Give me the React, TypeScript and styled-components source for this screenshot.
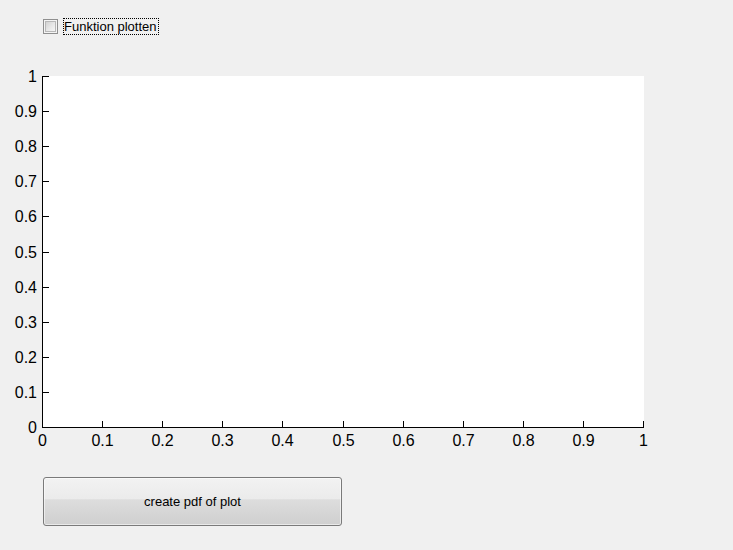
import React from "react";
import styled, { createGlobalStyle } from "styled-components";

const GlobalStyle = createGlobalStyle`
  html, body {
    margin: 0;
    padding: 0;
    background: #f0f0f0;
  }
  body {
    font-family: "Liberation Sans", Arial, sans-serif;
  }
`;

const Page = styled.div`
  width: 733px;
  height: 550px;
  background: #f0f0f0;
  padding-top: 18px;
  box-sizing: border-box;
  display: flex;
  flex-direction: column;
  align-items: flex-start;
  overflow: hidden;
`;

const CheckRow = styled.label`
  display: flex;
  align-items: center;
  gap: 5px;
  margin-left: 43px;
  height: 17px;
  cursor: default;
`;

const Box = styled.span`
  width: 13px;
  height: 13px;
  border: 1px solid #8f8f8f;
  box-sizing: content-box;
  display: flex;
  align-items: center;
  justify-content: center;
  background: #f4f4f4;
`;

const BoxInner = styled.span`
  width: 9px;
  height: 9px;
  border: 1px solid #b8b8b8;
  background: linear-gradient(135deg, #d2d2d2 0%, #e6e6e6 50%, #f6f6f6 100%);
`;

const LabelText = styled.span`
  font-family: "Liberation Sans", Arial, sans-serif;
  font-size: 13px;
  color: #000;
  line-height: 15px;
  padding: 0 1px 0 0;
  border: 1px dotted #000;
  white-space: nowrap;
`;

const PlotSvg = styled.svg`
  display: block;
  margin-top: 25px;
  flex-shrink: 0;
`;

const TickLabel = styled.text`
  font-family: "Liberation Sans", Arial, sans-serif;
  font-size: 16px;
  fill: #000;
`;

const PdfButton = styled.button`
  margin-top: 17px;
  margin-left: 43px;
  width: 299px;
  height: 49px;
  box-sizing: border-box;
  border: 1px solid #7a7a7a;
  border-radius: 3px;
  box-shadow: inset 0 0 0 1px rgba(255, 255, 255, 0.55);
  background: linear-gradient(
    to bottom,
    #f2f2f2 0%,
    #ebebeb 45%,
    #dddddd 46%,
    #cfcfcf 100%
  );
  font-family: "Liberation Sans", Arial, sans-serif;
  font-size: 13px;
  color: #000;
  padding: 0;
  cursor: default;
`;

// Plot geometry (svg coordinates; svg top at page y = 60)
const X0 = 42;
const X1 = 643;
const Y0 = 427 - 60; // bottom axis
const Y1 = 76 - 60; // top
const ticks = Array.from({ length: 11 }, (_, i) => i);
const fmt = (i: number) => (i === 0 ? "0" : i === 10 ? "1" : `0.${i}`);

function Plot() {
  const xs = ticks.map((i) => Math.round(X0 + (i * (X1 - X0)) / 10) + 0.5);
  const ys = ticks.map((i) => Math.round(Y0 - (i * (Y0 - Y1)) / 10) + 0.5);
  return (
    <PlotSvg width={680} height={400} viewBox="0 0 680 400">
      <rect x={X0} y={Y1} width={X1 - X0 + 1} height={Y0 - Y1 + 1} fill="#ffffff" />
      <line x1={X0 + 0.5} y1={Y1} x2={X0 + 0.5} y2={Y0 + 1} stroke="#000" strokeWidth={1} />
      <line x1={X0} y1={Y0 + 0.5} x2={X1 + 1} y2={Y0 + 0.5} stroke="#000" strokeWidth={1} />
      {xs.map((x, i) => (
        <g key={`x${i}`}>
          <line x1={x} y1={Y0 + 1} x2={x} y2={Y0 - 6} stroke="#000" strokeWidth={1} />
          <TickLabel x={x} y={Y0 + 18.5} textAnchor="middle">
            {fmt(i)}
          </TickLabel>
        </g>
      ))}
      {ys.map((y, i) => (
        <g key={`y${i}`}>
          <line x1={X0} y1={y} x2={X0 + 7} y2={y} stroke="#000" strokeWidth={1} />
          <TickLabel x={37} y={y + 5.5} textAnchor="end">
            {fmt(i)}
          </TickLabel>
        </g>
      ))}
    </PlotSvg>
  );
}

export default function App() {
  return (
    <>
      <GlobalStyle />
      <Page>
        <CheckRow>
          <Box>
            <BoxInner />
          </Box>
          <LabelText>Funktion plotten</LabelText>
        </CheckRow>
        <Plot />
        <PdfButton>create pdf of plot</PdfButton>
      </Page>
    </>
  );
}
